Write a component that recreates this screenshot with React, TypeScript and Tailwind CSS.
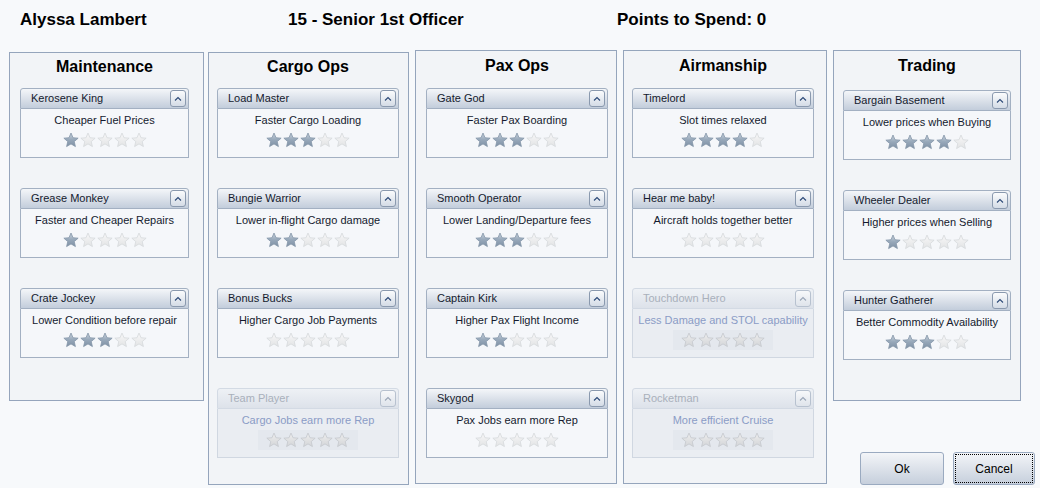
import React from "react";

type Perk = { name: string; desc: string; stars: number; disabled?: boolean };

type Col = {
  title: string;
  box: string;
  cardW: string;
  listTop: string;
  perks: Perk[];
};

const cols: Col[] = [
  {
    title: "Maintenance",
    box: "mt-[2px] w-[195px] h-[349px] pl-[10px] pt-[5px]",
    cardW: "w-[169px]",
    listTop: "mt-[12px]",
    perks: [
      { name: "Kerosene King", desc: "Cheaper Fuel Prices", stars: 1 },
      { name: "Grease Monkey", desc: "Faster and Cheaper Repairs", stars: 1 },
      { name: "Crate Jockey", desc: "Lower Condition before repair", stars: 3 },
    ],
  },
  {
    title: "Cargo Ops",
    box: "mt-[2px] ml-[4px] w-[201px] h-[433px] pl-[8px] pt-[5px]",
    cardW: "w-[182px]",
    listTop: "mt-[12px]",
    perks: [
      { name: "Load Master", desc: "Faster Cargo Loading", stars: 3 },
      { name: "Bungie Warrior", desc: "Lower in-flight Cargo damage", stars: 2 },
      { name: "Bonus Bucks", desc: "Higher Cargo Job Payments", stars: 0 },
      { name: "Team Player", desc: "Cargo Jobs earn more Rep", stars: 0, disabled: true },
    ],
  },
  {
    title: "Pax Ops",
    box: "ml-[6px] w-[202px] h-[434px] pl-[10px] pt-[6px]",
    cardW: "w-[182px]",
    listTop: "mt-[13px]",
    perks: [
      { name: "Gate God", desc: "Faster Pax Boarding", stars: 3 },
      { name: "Smooth Operator", desc: "Lower Landing/Departure fees", stars: 3 },
      { name: "Captain Kirk", desc: "Higher Pax Flight Income", stars: 2 },
      { name: "Skygod", desc: "Pax Jobs earn more Rep", stars: 0 },
    ],
  },
  {
    title: "Airmanship",
    box: "ml-[6px] w-[204px] h-[434px] pl-[8px] pt-[6px]",
    cardW: "w-[182px]",
    listTop: "mt-[13px]",
    perks: [
      { name: "Timelord", desc: "Slot times relaxed", stars: 4 },
      { name: "Hear me baby!", desc: "Aircraft holds together better", stars: 0 },
      { name: "Touchdown Hero", desc: "Less Damage and STOL capability", stars: 0, disabled: true },
      { name: "Rocketman", desc: "More efficient Cruise", stars: 0, disabled: true },
    ],
  },
];

const trading: Col = {
  title: "Trading",
  box: "w-[188px] h-[351px] pl-[9px] pt-[6px]",
  cardW: "w-[168px]",
  listTop: "mt-[15px]",
  perks: [
    { name: "Bargain Basement", desc: "Lower prices when Buying", stars: 4 },
    { name: "Wheeler Dealer", desc: "Higher prices when Selling", stars: 1 },
    { name: "Hunter Gatherer", desc: "Better Commodity Availability", stars: 3 },
  ],
};

function Star({ on, dim }: { on: boolean; dim?: boolean }) {
  return (
    <svg width="16" height="16" viewBox="0 0 16 16" className="block">
      <polygon
        points="8,1 10,5.75 15.13,6.18 11.23,9.55 12.41,14.57 8,11.9 3.59,14.57 4.77,9.55 0.87,6.18 6,5.75"
        fill={on ? "url(#starOn)" : dim ? "url(#starDim)" : "url(#starOff)"}
        stroke={on ? "#8495a8" : dim ? "#c4c8cd" : "#d6d9dc"}
        strokeWidth="0.8"
        strokeLinejoin="round"
      />
    </svg>
  );
}

function Chevron({ dim }: { dim?: boolean }) {
  return (
    <div
      className={`mr-[2px] flex h-[17px] w-[16px] items-center justify-center rounded-[3px] border ${
        dim ? "border-[#b7c1cf] bg-gradient-to-b from-[#f7f8fa] to-[#dfe4eb]" : "border-[#8a99ae] bg-gradient-to-b from-[#fbfcfd] to-[#d5dce6]"
      }`}
    >
      <svg width="8" height="6" viewBox="0 0 8 6">
        <path d="M1 4.5 L4 1.5 L7 4.5" fill="none" stroke={dim ? "#9aa6b8" : "#2d4a78"} strokeWidth="1.1" />
      </svg>
    </div>
  );
}

function Card({ p, w }: { p: Perk; w: string }) {
  const d = p.disabled;
  return (
    <div className={`${w} h-[70px] flex flex-col`}>
      <div
        className={`flex h-[21px] items-center justify-between rounded-t-[3px] border ${
          d
            ? "border-[#d3dae4] bg-gradient-to-b from-[#eef1f5] to-[#dde2ea] text-[#a9b0bb]"
            : "border-[#a3b0c2] bg-gradient-to-b from-[#f4f6f9] to-[#c3cddb] text-[#141a2e]"
        }`}
      >
        <span className="pl-[10px] text-[11px] leading-[13px]">{p.name}</span>
        <Chevron dim={d} />
      </div>
      <div
        className={`flex flex-1 flex-col items-center border border-t-0 ${
          d ? "border-[#d0d7e1] bg-[#eaedf2]" : "border-[#a3b0c2] bg-[#f5f7fa]"
        }`}
      >
        <span
          className={`mt-[4px] whitespace-nowrap text-[11px] leading-[14px] ${d ? "text-[#8a9cc6]" : "text-[#141a2e]"}`}
        >
          {p.desc}
        </span>
        <div className={`mt-[3px] flex gap-[1px] px-[8px] py-[2px] ${d ? "bg-[#e4e8ee]" : ""}`}>
          {[0, 1, 2, 3, 4].map((i) => (
            <Star key={i} on={!d && i < p.stars} dim={d} />
          ))}
        </div>
      </div>
    </div>
  );
}

function Column({ c }: { c: Col }) {
  return (
    <section className={`${c.box} shrink-0 border border-[#95a5bc] bg-[#f2f4f7]`}>
      <h2 className={`${c.cardW} text-center text-[16px] font-bold leading-[18px] text-black`}>{c.title}</h2>
      <div className={`${c.listTop} flex flex-col gap-[30px]`}>
        {c.perks.map((p) => (
          <Card key={p.name} p={p} w={c.cardW} />
        ))}
      </div>
    </section>
  );
}

export default function App() {
  return (
    <main className="h-[488px] w-[1040px] overflow-hidden bg-[#f7f9fb] font-['Liberation_Sans',Arial,sans-serif] text-[#141a2e]">
      <svg width="0" height="0" className="block">
        <defs>
          <linearGradient id="starOn" x1="0" y1="0" x2="0" y2="1">
            <stop offset="0" stopColor="#c9d3dd" />
            <stop offset="0.5" stopColor="#97a8ba" />
            <stop offset="1" stopColor="#7e90a4" />
          </linearGradient>
          <linearGradient id="starOff" x1="0" y1="0" x2="0" y2="1">
            <stop offset="0" stopColor="#f8f8f8" />
            <stop offset="1" stopColor="#e2e3e5" />
          </linearGradient>
          <linearGradient id="starDim" x1="0" y1="0" x2="0" y2="1">
            <stop offset="0" stopColor="#eeeeee" />
            <stop offset="1" stopColor="#d3d5d8" />
          </linearGradient>
        </defs>
      </svg>

      {/* top line */}
      <header className="flex h-[40px] items-center pl-[20px] text-[17px] font-bold text-black">
        <span className="w-[268px]">Alyssa Lambert</span>
        <span className="w-[329px]">15 - Senior 1st Officer</span>
        <span>Points to Spend: 0</span>
      </header>

      <div className="mt-[10px] flex items-start pl-[9px]">
        {cols.map((c) => (
          <Column key={c.title} c={c} />
        ))}

        <div className="ml-[6px] flex h-[435px] flex-col">
          <Column c={trading} />
          <div className="mt-auto flex gap-[9px] pl-[27px]">
            <button className="h-[33px] w-[84px] rounded-[3px] border border-[#9aaac0] bg-gradient-to-b from-[#f3f5f8] to-[#c6cfdc] text-[12px] text-black">
              Ok
            </button>
            <button className="h-[33px] w-[82px] rounded-[3px] border border-[#9aaac0] bg-gradient-to-b from-[#f3f5f8] to-[#c6cfdc] p-[1px] text-[12px] text-black">
              <span className="flex h-full w-full items-center justify-center border border-dotted border-black">Cancel</span>
            </button>
          </div>
        </div>
      </div>
    </main>
  );
}
